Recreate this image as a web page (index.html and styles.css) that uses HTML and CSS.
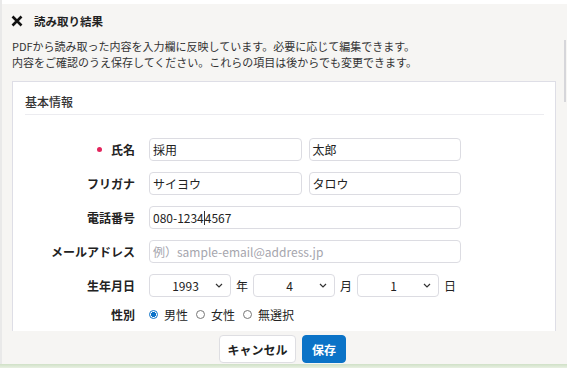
FILE: index.html
```html
<!DOCTYPE html>
<html lang="ja">
<head>
<meta charset="utf-8">
<link rel="stylesheet" href="styles.css">
</head>
<body>
<div class="page-edge"></div>
<div class="modal">
  <div class="modal-head">
    <div class="title-row">
      <svg class="close" viewBox="0 0 12 12" width="12" height="12"><path d="M1.5 1.5 L10.5 10.5 M10.5 1.5 L1.5 10.5" stroke="#111" stroke-width="2.6" stroke-linecap="butt"/></svg>
      <span class="title">読み取り結果</span>
    </div>
    <p class="desc">PDFから読み取った内容を入力欄に反映しています。必要に応じて編集できます。<br>内容をご確認のうえ保存してください。これらの項目は後からでも変更できます。</p>
  </div>
  <div class="panel">
    <div class="panel-title">基本情報</div>
    <div class="rows">
      <div class="row">
        <label class="lbl"><span class="req"></span>氏名</label>
        <div class="fields two">
          <div class="input">採用</div>
          <div class="input">太郎</div>
        </div>
      </div>
      <div class="row">
        <label class="lbl">フリガナ</label>
        <div class="fields two">
          <div class="input">サイヨウ</div>
          <div class="input">タロウ</div>
        </div>
      </div>
      <div class="row">
        <label class="lbl">電話番号</label>
        <div class="fields">
          <div class="input">080-1234<span class="caret"></span>4567</div>
        </div>
      </div>
      <div class="row">
        <label class="lbl">メールアドレス</label>
        <div class="fields">
          <div class="input ph">例）sample-email@address.jp</div>
        </div>
      </div>
      <div class="row">
        <label class="lbl">生年月日</label>
        <div class="fields date">
          <div class="select"><span>1993</span><svg viewBox="0 0 8 5" width="8" height="5"><path d="M1 1 L4 4 L7 1" fill="none" stroke="#333" stroke-width="1.2"/></svg></div>
          <span class="unit">年</span>
          <div class="select"><span>4</span><svg viewBox="0 0 8 5" width="8" height="5"><path d="M1 1 L4 4 L7 1" fill="none" stroke="#333" stroke-width="1.2"/></svg></div>
          <span class="unit">月</span>
          <div class="select"><span>1</span><svg viewBox="0 0 8 5" width="8" height="5"><path d="M1 1 L4 4 L7 1" fill="none" stroke="#333" stroke-width="1.2"/></svg></div>
          <span class="unit">日</span>
        </div>
      </div>
      <div class="row short">
        <label class="lbl">性別</label>
        <div class="fields radios">
          <span class="radio on"></span><span class="rtext">男性</span>
          <span class="radio"></span><span class="rtext">女性</span>
          <span class="radio"></span><span class="rtext">無選択</span>
        </div>
      </div>
    </div>
  </div>
  <div class="footer">
    <button class="btn cancel">キャンセル</button>
    <button class="btn save">保存</button>
  </div>
  <div class="scroll-thumb"></div>
</div>
<div class="page-bottom"></div>
</body>
</html>
```

FILE: styles.css
```css
* { box-sizing: border-box; }
html, body { margin: 0; padding: 0; }
body {
  width: 567px;
  height: 368px;
  overflow: hidden;
  background: #ffffff;
  font-family: "Noto Sans CJK JP", "Noto Sans", sans-serif;
  color: #333;
  position: relative;
  padding-top: 4px;
}
.page-edge {
  position: absolute;
  left: 0;
  top: 0;
  width: 2px;
  height: 364px;
  background: #e9e9e9;
}
.modal {
  position: relative;
  margin-left: 2px;
  height: 360px;
  background: #f6f5f3;
  display: flex;
  flex-direction: column;
}
.modal-head {
  padding: 9px 0 0 9px;
}
.title-row {
  display: flex;
  align-items: center;
  gap: 11px;
  height: 16px;
}
.close { display: block; }
.title {
  font-size: 11.5px;
  font-weight: 700;
  color: #222;
}
.desc {
  margin: 9px 0 0 1px;
  font-size: 11px;
  line-height: 16px;
  color: #333;
}
.panel {
  margin: 11px 11px 0 10px;
  height: 250px;
  background: #fff;
  border: 1px solid #dedee6;
  border-bottom: none;
  padding: 0 11px 0 12px;
}
.panel-title {
  font-size: 12px;
  font-weight: 500;
  color: #333;
  height: 33px;
  padding-top: 12px;
  line-height: 16px;
  border-bottom: 1px solid #ececf0;
}
.rows {
  padding-top: 23px;
  display: flex;
  flex-direction: column;
  gap: 11px;
}
.row {
  display: flex;
  align-items: center;
  height: 23px;
}
.row.short { height: 20px; margin-top: -4px; }
.lbl {
  width: 110px;
  flex: none;
  text-align: right;
  font-size: 12px;
  font-weight: 700;
  color: #222;
  margin-right: 14px;
  display: flex;
  justify-content: flex-end;
  align-items: center;
}
.req {
  width: 5px;
  height: 5px;
  border-radius: 50%;
  background: #e3245c;
  margin-right: 9px;
}
.fields {
  width: 312px;
  display: flex;
  align-items: center;
}
.fields.two { gap: 7px; }
.fields.two .input { flex: 1; }
.input {
  flex: 1;
  height: 23px;
  border: 1px solid #dcdce2;
  border-radius: 4px;
  font-size: 12px;
  line-height: 21px;
  padding-left: 3px;
  color: #222;
  background: #fff;
}
.input.ph { color: #a5a5ad; }
.caret {
  display: inline-block;
  width: 1px;
  height: 14px;
  background: #333;
  vertical-align: -2px;
}
.date { gap: 0; }
.select {
  width: 82px;
  height: 23px;
  border: 1px solid #dcdce2;
  border-radius: 4px;
  display: flex;
  align-items: center;
  justify-content: space-between;
  padding: 0 7px 0 0;
  font-size: 12px;
  color: #222;
  background: #fff;
}
.select span { flex: 1; text-align: center; padding-left: 6px; }
.unit {
  font-size: 12px;
  color: #222;
  width: 22px;
  text-align: center;
}
.radios {
  font-size: 12px;
  color: #222;
}
.radio {
  width: 9px;
  height: 9px;
  border-radius: 50%;
  border: 1px solid #777;
  margin: 0 6px 0 0;
  flex: none;
  background: #fff;
}
.radio.on {
  border: 1px solid #0b72c8;
  background: radial-gradient(circle, #0b72c8 0 2.3px, #fff 2.8px);
}
.rtext { margin-right: 8px; }
.footer {
  display: flex;
  justify-content: center;
  gap: 6px;
  padding-top: 4px;
  margin-left: -4px;
}
.btn {
  font-family: "Noto Sans CJK JP", "Noto Sans", sans-serif;
  font-size: 12px;
  font-weight: 700;
  height: 28px;
  border-radius: 4px;
  padding: 0;
}
.cancel {
  width: 77px;
  background: #fff;
  border: 1px solid #dedee2;
  color: #222;
}
.save {
  width: 44px;
  background: #0b73c7;
  border: 1px solid #0b73c7;
  color: #fff;
}
.scroll-thumb {
  position: absolute;
  right: 1px;
  top: 36px;
  width: 2px;
  height: 62px;
  background: #d6d6da;
}
.page-bottom {
  height: 4px;
  background: linear-gradient(#cfe0c6, #e8f0e2);
}
```
